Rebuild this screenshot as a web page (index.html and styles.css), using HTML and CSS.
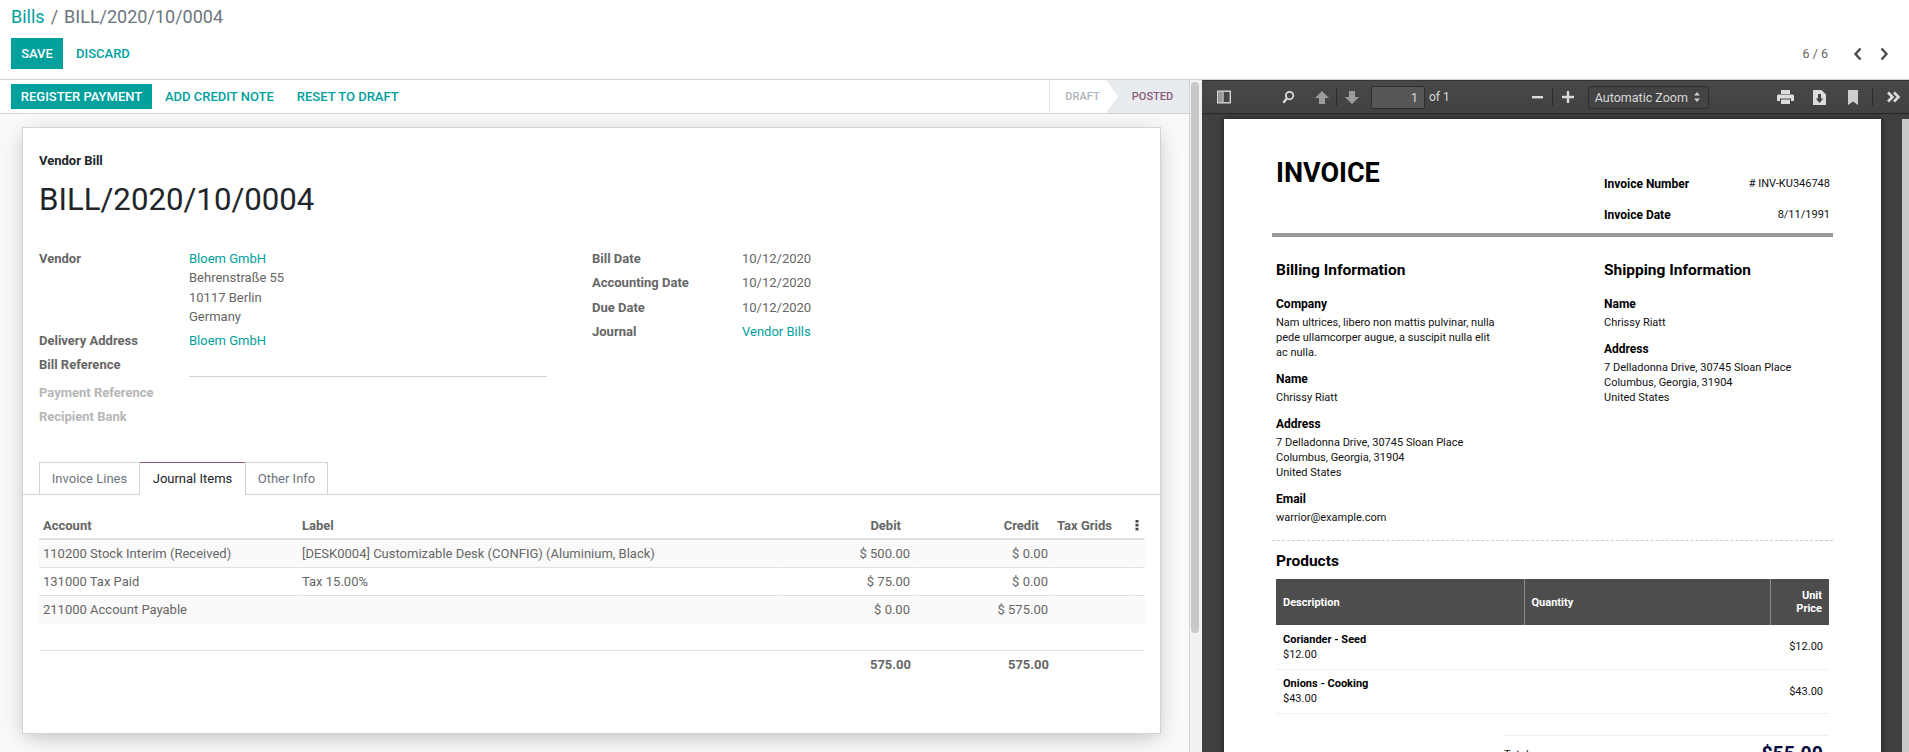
FILE: index.html
```html
<!DOCTYPE html>
<html lang="en">
<head>
    <meta charset="UTF-8">
    <title>Bills - BILL/2020/10/0004</title>
    <link rel="stylesheet" href="styles.css">
</head>
<body>
    <div class="control-panel">
        <div class="breadcrumb"><a href="#">Bills</a><span class="crumb-sep">/</span><span class="crumb-current">BILL/2020/10/0004</span></div>
        <div class="cp-buttons">
            <div class="cp-left">
                <button class="btn btn-primary btn-save">SAVE</button>
                <button class="btn btn-link btn-discard">DISCARD</button>
            </div>
            <div class="pager">
                <span class="pager-value">6 / 6</span>
                <svg class="pager-arrow" width="10" height="14" viewBox="0 0 10 14"><path d="M7.5 1.5 2.5 7l5 5.5" fill="none" stroke="#4c4c4c" stroke-width="2.4"/></svg>
                <svg class="pager-arrow" width="10" height="14" viewBox="0 0 10 14"><path d="M2.5 1.5 7.5 7l-5 5.5" fill="none" stroke="#4c4c4c" stroke-width="2.4"/></svg>
            </div>
        </div>
    </div>

    <div class="split">
        <div class="form-pane">
            <div class="statusbar">
                <div class="status-actions">
                    <button class="btn btn-primary btn-status">REGISTER PAYMENT</button>
                    <button class="btn btn-link btn-credit">ADD CREDIT NOTE</button>
                    <button class="btn btn-link btn-reset">RESET TO DRAFT</button>
                </div>
                <div class="status-steps">
                    <span class="step step-draft">DRAFT</span>
                    <span class="step step-posted">POSTED</span>
                </div>
            </div>
            <div class="form-bg">
                <div class="sheet">
                    <div class="doc-type">Vendor Bill</div>
                    <h1 class="doc-name">BILL/2020/10/0004</h1>
                    <div class="groups">
                        <div class="group group-left">
                            <div class="label label-vendor">Vendor</div>
                            <div class="value value-vendor"><a href="#">Bloem GmbH</a><br>Behrenstraße 55<br>10117 Berlin<br>Germany</div>
                            <div class="label">Delivery Address</div>
                            <div class="value"><a href="#">Bloem GmbH</a></div>
                            <div class="label">Bill Reference</div>
                            <div class="value"><div class="input-line"></div></div>
                            <div class="label label-muted">Payment Reference</div>
                            <div class="value"></div>
                            <div class="label label-muted">Recipient Bank</div>
                            <div class="value"></div>
                        </div>
                        <div class="group group-right">
                            <div class="label">Bill Date</div>
                            <div class="value">10/12/2020</div>
                            <div class="label">Accounting Date</div>
                            <div class="value">10/12/2020</div>
                            <div class="label">Due Date</div>
                            <div class="value">10/12/2020</div>
                            <div class="label">Journal</div>
                            <div class="value"><a href="#">Vendor Bills</a></div>
                        </div>
                    </div>
                    <div class="tabs">
                        <span class="tab tab-lines">Invoice Lines</span>
                        <span class="tab tab-items active">Journal Items</span>
                        <span class="tab tab-other">Other Info</span>
                    </div>
                    <table class="lines">
                        <colgroup>
                            <col class="col-account"><col class="col-label"><col class="col-money"><col class="col-money"><col class="col-grids"><col class="col-opt">
                        </colgroup>
                        <thead>
                            <tr>
                                <th>Account</th>
                                <th>Label</th>
                                <th class="num num-head">Debit</th>
                                <th class="num num-head">Credit</th>
                                <th>Tax Grids</th>
                                <th class="opt"><svg width="4" height="12" viewBox="0 0 4 12"><rect x="0.5" y="1" width="3" height="2.6"/><rect x="0.5" y="4.9" width="3" height="2.6"/><rect x="0.5" y="8.8" width="3" height="2.6"/></svg></th>
                            </tr>
                        </thead>
                        <tbody>
                            <tr class="odd">
                                <td>110200 Stock Interim (Received)</td>
                                <td>[DESK0004] Customizable Desk (CONFIG) (Aluminium, Black)</td>
                                <td class="num">$ 500.00</td>
                                <td class="num">$ 0.00</td>
                                <td></td><td></td>
                            </tr>
                            <tr>
                                <td>131000 Tax Paid</td>
                                <td>Tax 15.00%</td>
                                <td class="num">$ 75.00</td>
                                <td class="num">$ 0.00</td>
                                <td></td><td></td>
                            </tr>
                            <tr class="odd last-line">
                                <td>211000 Account Payable</td>
                                <td></td>
                                <td class="num">$ 0.00</td>
                                <td class="num">$ 575.00</td>
                                <td></td><td></td>
                            </tr>
                            <tr class="filler"><td colspan="6"></td></tr>
                        </tbody>
                        <tfoot>
                            <tr>
                                <td></td><td></td>
                                <td class="num">575.00</td>
                                <td class="num">575.00</td>
                                <td></td><td></td>
                            </tr>
                        </tfoot>
                    </table>
                </div>
            </div>
        </div>
        <div class="scroll-gutter"><div class="scroll-thumb"></div></div>

        <div class="viewer">
            <div class="viewer-toolbar">
                <svg class="tool tool-sidebar" width="14" height="14" viewBox="0 0 14 14"><rect x="0.7" y="1.200" width="12.600" height="11.600" fill="none" stroke="#d8d8d8" stroke-width="1.400"/><rect x="1.400" y="1.900" width="4" height="10.200" fill="#9a9a9a"/><rect x="5.400" y="1.900" width="1.200" height="10.200" fill="#d8d8d8"/></svg>
                <svg class="tool tool-search" width="14" height="15" viewBox="0 0 14 15"><circle cx="8.600" cy="5.600" r="3.700" fill="none" stroke="#dcdcdc" stroke-width="1.800"/><path d="M5.800 8.600 2.300 12.800" stroke="#dcdcdc" stroke-width="2.400"/></svg>
                <svg class="tool tool-up" width="14" height="15" viewBox="0 0 14 15"><path d="M7 1 14 8H10V14H4V8H0z" fill="#9c9c9c"/></svg>
                <span class="tool-sep sep-page"></span>
                <svg class="tool tool-down" width="14" height="15" viewBox="0 0 14 15"><path d="M7 14 14 7H10V1H4V7H0z" fill="#9c9c9c"/></svg>
                <div class="page-input">1</div>
                <span class="page-of">of 1</span>
                <svg class="tool tool-minus" width="11" height="3" viewBox="0 0 11 3"><rect width="11" height="2.400" fill="#dcdcdc"/></svg>
                <span class="tool-sep sep-zoom"></span>
                <svg class="tool tool-plus" width="12" height="12" viewBox="0 0 12 12"><path d="M4.800 0h2.400v4.800H12v2.400H7.200V12H4.800V7.200H0V4.800h4.800z" fill="#dcdcdc"/></svg>
                <div class="zoom-select">Automatic Zoom<svg width="6" height="10" viewBox="0 0 6 10"><path d="M3 0 6 3.500H0zM3 10 0 6.500H6z" fill="#d0d0d0"/></svg></div>
                <svg class="tool tool-print" width="17" height="14" viewBox="0 0 17 14"><path d="M4 0h9v4H4zM1.500 4.600h14q1.500 0 1.500 1.500V11h-3V8.500H3V11H0V6.100q0-1.500 1.500-1.500zM4 9.500h9V14H4z" fill="#dcdcdc"/></svg>
                <svg class="tool tool-save" width="13" height="15" viewBox="0 0 13 15"><path d="M0 0h8.500L13 4.500V15H0zM5 4v4.500H2.800L6.500 13l3.700-4.500H8V4z" fill="#dcdcdc" fill-rule="evenodd"/></svg>
                <svg class="tool tool-mark" width="10" height="15" viewBox="0 0 10 15"><path d="M0 0h10v15L5 11.500 0 15z" fill="#cfcfcf"/></svg>
                <span class="tool-sep sep-more"></span>
                <svg class="tool tool-more" width="14" height="12" viewBox="0 0 14 12"><path d="M1 1.500 5.500 6 1 10.500M7 1.500 11.500 6 7 10.500" fill="none" stroke="#dcdcdc" stroke-width="2.600"/></svg>
            </div>
            <div class="viewer-body">
                <div class="pdf-page">
                    <div class="inv-head">
                        <div class="inv-title">INVOICE</div>
                        <div class="inv-meta">
                            <div class="meta-row"><b>Invoice Number</b><span># INV-KU346748</span></div>
                            <div class="meta-row"><b>Invoice Date</b><span>8/11/1991</span></div>
                        </div>
                    </div>
                    <div class="inv-rule"></div>
                    <div class="inv-columns">
                        <div class="inv-col">
                            <h3>Billing Information</h3>
                            <h4>Company</h4>
                            <p>Nam ultrices, libero non mattis pulvinar, nulla<br>pede ullamcorper augue, a suscipit nulla elit<br>ac nulla.</p>
                            <h4>Name</h4>
                            <p>Chrissy Riatt</p>
                            <h4>Address</h4>
                            <p>7 Delladonna Drive, 30745 Sloan Place<br>Columbus, Georgia, 31904<br>United States</p>
                            <h4>Email</h4>
                            <p>warrior@example.com</p>
                        </div>
                        <div class="inv-col">
                            <h3>Shipping Information</h3>
                            <h4>Name</h4>
                            <p>Chrissy Riatt</p>
                            <h4>Address</h4>
                            <p>7 Delladonna Drive, 30745 Sloan Place<br>Columbus, Georgia, 31904<br>United States</p>
                        </div>
                    </div>
                    <div class="inv-dash"></div>
                    <h3 class="products-title">Products</h3>
                    <table class="products">
                        <thead>
                            <tr>
                                <th class="p-desc">Description</th>
                                <th class="p-qty">Quantity</th>
                                <th class="p-price">Unit<br>Price</th>
                            </tr>
                        </thead>
                        <tbody>
                            <tr>
                                <td><b>Coriander - Seed</b><br>$12.00</td>
                                <td></td>
                                <td class="p-price">$12.00</td>
                            </tr>
                            <tr>
                                <td><b>Onions - Cooking</b><br>$43.00</td>
                                <td></td>
                                <td class="p-price">$43.00</td>
                            </tr>
                        </tbody>
                    </table>
                    <div class="inv-total"><span>Total</span><b>$55.00</b></div>
                </div>
                <div class="viewer-scroll"></div>
            </div>
        </div>
    </div>
</body>
</html>
```

FILE: styles.css
```css
* {
    box-sizing: border-box;
}
html, body {
    height: 100%;
}
body {
    margin: 0;
    overflow: hidden;
    background: #fff;
    font-family: Roboto, "Noto Sans", sans-serif;
    font-size: 13px;
    color: #666;
}
a {
    color: #00a09d;
    text-decoration: none;
}
.control-panel {
    height: 80px;
    padding: 0 11px;
    border-bottom: 1px solid #ced4da;
}
.breadcrumb {
    height: 38px;
    padding-top: 5px;
    font-size: 18px;
    line-height: 24px;
}
.crumb-sep {
    margin: 0 6px;
    color: #6c757d;
}
.crumb-current {
    color: #6c757d;
}
.cp-buttons {
    display: flex;
    justify-content: space-between;
    align-items: center;
}
.cp-left {
    display: flex;
}
.btn {
    border: 0;
    padding: 0;
    font-family: inherit;
    font-size: 13px;
    font-weight: 500;
}
.btn-primary {
    background: #00a09d;
    color: #fff;
}
.btn-link {
    background: none;
    color: #00a09d;
}
.btn-save {
    width: 52px;
    height: 31px;
}
.btn-discard {
    margin-left: 13px;
}
.pager {
    display: flex;
    align-items: center;
    padding-right: 9px;
    color: #666;
    font-size: 12.5px;
}
.pager-value {
    margin-right: 25px;
}
.pager-arrow + .pager-arrow {
    margin-left: 16px;
}
.split {
    display: flex;
    height: 672px;
}
.form-pane {
    width: 1190px;
    display: flex;
    flex-direction: column;
    border-right: 1px solid #ced4da;
}
.statusbar {
    height: 34px;
    flex: none;
    display: flex;
    justify-content: space-between;
    align-items: center;
    padding-left: 11px;
    border-bottom: 1px solid #ced4da;
}
.status-actions {
    display: flex;
}
.btn-status {
    width: 141px;
    height: 25px;
}
.btn-credit {
    margin-left: 13px;
}
.btn-reset {
    margin-left: 23px;
}
.status-steps {
    display: flex;
    height: 33px;
    font-size: 11px;
    font-weight: 500;
}
.step {
    display: flex;
    align-items: center;
    justify-content: center;
}
.step-draft {
    width: 57px;
    padding-left: 9px;
    border-left: 1px solid #dee2e6;
    color: #adb5bd;
}
.step-posted {
    width: 83px;
    padding-left: 10px;
    background: #e9ecef;
    color: #875a7b;
    clip-path: polygon(0 0, 100% 0, 100% 100%, 0 100%, 12px 50%);
}
.form-bg {
    flex: 1;
    background: #f9f9f9;
    padding: 13px 0 0 22px;
    overflow: hidden;
}
.sheet {
    width: 1139px;
    height: 607px;
    padding: 24px 0 0;
    background: #fff;
    border: 1px solid #ced4da;
    box-shadow: 0 5px 20px -3px rgba(0, 0, 0, 0.25);
}
.doc-type {
    margin-left: 16px;
    font-weight: 700;
    color: #212529;
    line-height: 18px;
}
.doc-name {
    margin: 11px 0 0 16px;
    font-size: 31.2px;
    font-weight: 400;
    line-height: 38px;
    color: #212529;
}
.groups {
    display: flex;
    margin: 30px 0 0 16px;
}
.group {
    display: grid;
    grid-auto-rows: min-content;
    line-height: 20px;
}
.group-left {
    width: 553px;
    grid-template-columns: 150px 358px;
}
.group-right {
    grid-template-columns: 150px 200px;
    row-gap: 4.3px;
}
.label {
    font-weight: 700;
}
.label-muted {
    color: #b6b6b6;
}
.group-left .label,
.group-left .value {
    margin-bottom: 4px;
}
.value-vendor {
    line-height: 19.4px;
}
.input-line {
    height: 22px;
    margin-bottom: 2px;
    border-bottom: 1px solid #ced4da;
}
.group-left .label-muted,
.group-left .label-muted + .value {
    height: 20px;
}
.tabs {
    display: flex;
    margin-top: 31px;
    padding-left: 16px;
    height: 33px;
    border-bottom: 1px solid #ced4da;
}
.tab {
    height: 33px;
    border: 1px solid #ced4da;
    line-height: 31px;
    text-align: center;
    color: #6c757d;
}
.tab-lines {
    width: 101px;
}
.tab-items {
    width: 105px;
    color: #212529;
    background: #fff;
    border-top-color: #875a7b;
    border-bottom-color: #fff;
    border-left: 0;
    border-right: 0;
}
.tab-other {
    width: 83px;
}
.lines {
    table-layout: fixed;
    border-collapse: separate;
    border-spacing: 0;
    width: 1106px;
    margin: 16px 0 0 16px;
}
.col-account { width: 259px; }
.col-label { width: 479px; }
.col-money { width: 138px; }
.col-grids { width: 82px; }
.col-opt { width: 10px; }
.lines th {
    height: 29px;
    padding: 2px 4px 0;
    text-align: left;
    font-weight: 700;
    border-right: 1px solid transparent;
    border-bottom: 2px solid #dee2e6;
}
.lines td {
    height: 28px;
    padding: 0 4px;
    white-space: nowrap;
    border-right: 1px solid transparent;
    border-bottom: 1px solid #dee2e6;
}
.lines .num {
    text-align: right;
    padding-right: 4px;
}
.lines .num-head {
    padding-right: 13px;
}
.lines .opt {
    padding: 2px 0 0;
    text-align: left;
}
.opt svg {
    display: block;
    fill: #444;
}
.lines .odd td {
    background: #fafafa;
}
.lines .last-line td {
    border-bottom: 0;
}
.lines .filler td {
    height: 27px;
    border-right: 0;
    border-bottom: 1px solid #dee2e6;
}
.lines tfoot td {
    border-bottom: 0;
    font-weight: 700;
}
.lines tfoot .num {
    padding-right: 3px;
}
.scroll-gutter {
    width: 12px;
    flex: none;
    background: #f1f1f1;
    padding: 2px 3px 0 1px;
}
.scroll-thumb {
    height: 551px;
    background: #c8c8c8;
    border-radius: 4px;
}
.viewer {
    flex: 1;
    display: flex;
    flex-direction: column;
    background: #404040;
    overflow: hidden;
}
.viewer-toolbar {
    height: 33px;
    flex: none;
    display: flex;
    align-items: center;
    background: linear-gradient(#484848, #414141);
    border-top: 1px solid #333;
    box-shadow: 0 1px 1px rgba(0, 0, 0, 0.35);
    color: #d9d9d9;
    font-size: 12px;
}
.tool {
    flex: none;
}
.tool-sep {
    flex: none;
    width: 1px;
    height: 18px;
    background: #2c2c2c;
}
.tool-sidebar { margin-left: 15px; }
.tool-search { margin-left: 50px; }
.tool-up { margin-left: 20px; }
.sep-page { margin-left: 7px; }
.tool-down { margin-left: 8px; }
.page-input {
    width: 54px;
    height: 23px;
    margin-left: 12px;
    padding-right: 6px;
    text-align: right;
    line-height: 22px;
    background: #565656;
    border: 1px solid #2e2e2e;
    border-radius: 2px;
    font-size: 13px;
}
.page-of { margin-left: 4px; }
.tool-minus { margin-left: 82px; }
.sep-zoom { margin-left: 9px; }
.tool-plus { margin-left: 9px; }
.zoom-select {
    display: flex;
    align-items: center;
    justify-content: space-between;
    width: 121px;
    height: 23px;
    margin-left: 14px;
    padding: 0 8px 0 6px;
    background: #444;
    border: 1px solid #2e2e2e;
    border-radius: 2px;
    font-size: 12.5px;
}
.tool-print { margin-left: 68px; }
.tool-save { margin-left: 19px; }
.tool-mark { margin-left: 22px; }
.sep-more { margin-left: 14px; }
.tool-more { margin-left: 14px; }
.viewer-body {
    flex: 1;
    display: flex;
    align-items: flex-start;
    padding: 6px 0 0 22px;
    overflow: hidden;
}
.pdf-page {
    width: 657px;
    height: 700px;
    flex: none;
    padding: 0 48px 0 48px;
    background: #fff;
    color: #111;
    font-size: 11px;
    line-height: 15px;
    box-shadow: 0 0 6px rgba(0, 0, 0, 0.6);
}
.viewer-scroll {
    width: 7px;
    height: 640px;
    margin-left: 21px;
    background: #c8c8c8;
}
.inv-head {
    display: flex;
    height: 114px;
    padding: 36px 3px 0 4px;
}
.inv-title {
    width: 328px;
    font-size: 27px;
    font-weight: 700;
    line-height: 36px;
    color: #000;
}
.inv-meta {
    flex: 1;
    padding-top: 19px;
}
.meta-row {
    display: flex;
    justify-content: space-between;
    height: 31px;
    line-height: 20px;
}
.meta-row b {
    font-size: 12px;
    color: #000;
}
.inv-rule {
    height: 4px;
    background: #999;
}
.inv-columns {
    display: flex;
    height: 303px;
    padding: 0 4px;
}
.inv-col {
    width: 328px;
}
.inv-col:last-child {
    flex: 1;
    width: auto;
}
.inv-col h3,
.products-title {
    margin: 0;
    font-size: 15.5px;
    font-weight: 700;
    color: #000;
    line-height: 22px;
}
.inv-col h3 {
    margin: 22px 0 14px;
}
.inv-col h4 {
    margin: 0 0 2px;
    font-size: 12px;
    font-weight: 700;
    line-height: 18px;
    color: #000;
}
.inv-col p {
    margin: 0 0 10px;
}
.inv-dash {
    border-top: 1px dashed #ccc;
}
.products-title {
    margin: 9px 4px 7px;
}
.products {
    width: 553px;
    margin-left: 4px;
    border-collapse: collapse;
    table-layout: fixed;
}
.products th {
    height: 46px;
    padding: 0 7px;
    background: #4d4d4d;
    color: #fff;
    text-align: left;
    font-size: 11px;
    line-height: 13px;
    border-right: 1px solid #8a8a8a;
}
.products th:last-child {
    border-right: 0;
}
.p-desc { width: 248px; }
.p-qty { width: 246px; }
.products .p-price {
    text-align: right;
}
.products td {
    height: 44px;
    padding: 0 6px 0 7px;
    border-bottom: 1px solid #eef0f6;
}
.products td b {
    color: #000;
}
.inv-total {
    display: flex;
    justify-content: space-between;
    align-items: flex-start;
    width: 325px;
    margin: 21px 0 0 232px;
    padding: 9px 6px 0 0;
    border-top: 1px solid #eef0f6;
}
.inv-total span {
    margin-top: 2px;
}
.inv-total b {
    font-size: 19.5px;
    line-height: 20px;
    color: #0a0a3c;
}
```
